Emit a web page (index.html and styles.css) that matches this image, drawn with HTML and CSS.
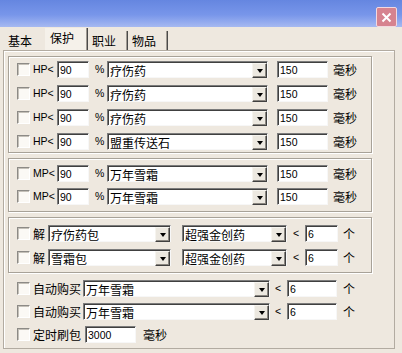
FILE: index.html
```html
<!DOCTYPE html>
<html lang="zh">
  <head>
    <meta charset="UTF-8" />
    <title>保护</title>
    <link rel="stylesheet" href="styles.css">
  </head>
  <body>
    <div class="titlebar">
      <button class="close-btn" title="关闭">
        <svg width="11" height="11" viewBox="0 0 11 11">
          <path d="M1.5 1.5 L9.5 9.5 M9.5 1.5 L1.5 9.5" stroke="#fff" stroke-width="2" />
        </svg>
      </button>
    </div>

    <div class="tabs">
      <div class="tab tab-first">基本</div>
      <div class="tab active">保护</div>
      <div class="tab">职业</div>
      <div class="tab">物品</div>
    </div>

    <div class="panel">
      <!-- HP -->
      <div class="group group-hp">
        <div class="row">
          <input type="checkbox" class="check" />
          <span class="lbl lbl-stat">HP&lt;</span>
          <input class="edit w-pct" value="90" />
          <span class="lbl lbl-pct">%</span>
          <div class="combo w-item"><span class="combo-text">疗伤药</span><span class="combo-btn"></span></div>
          <input class="edit w-ms" value="150" />
          <span class="lbl lbl-unit">毫秒</span>
        </div>
        <div class="row">
          <input type="checkbox" class="check" />
          <span class="lbl lbl-stat">HP&lt;</span>
          <input class="edit w-pct" value="90" />
          <span class="lbl lbl-pct">%</span>
          <div class="combo w-item"><span class="combo-text">疗伤药</span><span class="combo-btn"></span></div>
          <input class="edit w-ms" value="150" />
          <span class="lbl lbl-unit">毫秒</span>
        </div>
        <div class="row">
          <input type="checkbox" class="check" />
          <span class="lbl lbl-stat">HP&lt;</span>
          <input class="edit w-pct" value="90" />
          <span class="lbl lbl-pct">%</span>
          <div class="combo w-item"><span class="combo-text">疗伤药</span><span class="combo-btn"></span></div>
          <input class="edit w-ms" value="150" />
          <span class="lbl lbl-unit">毫秒</span>
        </div>
        <div class="row">
          <input type="checkbox" class="check" />
          <span class="lbl lbl-stat">HP&lt;</span>
          <input class="edit w-pct" value="90" />
          <span class="lbl lbl-pct">%</span>
          <div class="combo w-item"><span class="combo-text">盟重传送石</span><span class="combo-btn"></span></div>
          <input class="edit w-ms" value="150" />
          <span class="lbl lbl-unit">毫秒</span>
        </div>
      </div>

      <!-- MP -->
      <div class="group group-mp">
        <div class="row">
          <input type="checkbox" class="check" />
          <span class="lbl lbl-stat">MP&lt;</span>
          <input class="edit w-pct" value="90" />
          <span class="lbl lbl-pct">%</span>
          <div class="combo w-item"><span class="combo-text">万年雪霜</span><span class="combo-btn"></span></div>
          <input class="edit w-ms" value="150" />
          <span class="lbl lbl-unit">毫秒</span>
        </div>
        <div class="row">
          <input type="checkbox" class="check" />
          <span class="lbl lbl-stat">MP&lt;</span>
          <input class="edit w-pct" value="90" />
          <span class="lbl lbl-pct">%</span>
          <div class="combo w-item"><span class="combo-text">万年雪霜</span><span class="combo-btn"></span></div>
          <input class="edit w-ms" value="150" />
          <span class="lbl lbl-unit">毫秒</span>
        </div>
      </div>

      <!-- unpack -->
      <div class="group group-unpack">
        <div class="row">
          <input type="checkbox" class="check" />
          <span class="lbl lbl-jie">解</span>
          <div class="combo w-pack"><span class="combo-text">疗伤药包</span><span class="combo-btn"></span></div>
          <div class="combo w-drug"><span class="combo-text">超强金创药</span><span class="combo-btn"></span></div>
          <span class="lbl lbl-lt">&lt;</span>
          <input class="edit w-count" value="6" />
          <span class="lbl lbl-ge">个</span>
        </div>
        <div class="row">
          <input type="checkbox" class="check" />
          <span class="lbl lbl-jie">解</span>
          <div class="combo w-pack"><span class="combo-text">雪霜包</span><span class="combo-btn"></span></div>
          <div class="combo w-drug"><span class="combo-text">超强金创药</span><span class="combo-btn"></span></div>
          <span class="lbl lbl-lt">&lt;</span>
          <input class="edit w-count" value="6" />
          <span class="lbl lbl-ge">个</span>
        </div>
      </div>

      <!-- buy / refresh -->
      <div class="section-buy">
        <div class="row">
          <input type="checkbox" class="check" />
          <span class="lbl lbl-long">自动购买</span>
          <div class="combo w-buy"><span class="combo-text">万年雪霜</span><span class="combo-btn"></span></div>
          <span class="lbl lbl-lt2">&lt;</span>
          <input class="edit w-count2" value="6" />
          <span class="lbl lbl-ge2">个</span>
        </div>
        <div class="row">
          <input type="checkbox" class="check" />
          <span class="lbl lbl-long">自动购买</span>
          <div class="combo w-buy"><span class="combo-text">万年雪霜</span><span class="combo-btn"></span></div>
          <span class="lbl lbl-lt2">&lt;</span>
          <input class="edit w-count2" value="6" />
          <span class="lbl lbl-ge2">个</span>
        </div>
        <div class="row">
          <input type="checkbox" class="check" />
          <span class="lbl lbl-long">定时刷包</span>
          <input class="edit w-timer" value="3000" />
          <span class="lbl lbl-unit2">毫秒</span>
        </div>
      </div>
    </div>
  </body>
</html>
```

FILE: styles.css
```css
* {
  box-sizing: border-box;
}
body {
  margin: 0;
  width: 402px;
  height: 353px;
  overflow: hidden;
  background-color: #eee8df;
  font-family: "Noto Sans CJK SC", "Liberation Sans", sans-serif;
  font-size: 12px;
  color: #000;
}

/* title bar */
.titlebar {
  height: 27px;
  display: flex;
  justify-content: flex-end;
  align-items: flex-start;
  padding: 7px 5px 0 0;
  background: linear-gradient(#6586e0, #7896ea 55%, #a6b9f1);
}
.close-btn {
  width: 21px;
  height: 20px;
  padding: 0;
  display: flex;
  align-items: center;
  justify-content: center;
  border: 1px solid #f2d9e0;
  border-radius: 2px;
  background-color: #d6838f;
}

/* tabs */
.tabs {
  height: 23px;
  display: flex;
  align-items: flex-end;
  padding-left: 3px;
}
.tab {
  width: 40px;
  height: 19px;
  line-height: 16px;
  padding: 2px 0 1px 4px;
  border-right: 1px solid #4a4a4a;
  box-shadow: inset -1px 0 #a09a92;
}
.tab-first {
  width: 42px;
  padding-left: 5px;
  border-right: none;
  box-shadow: none;
}
.tab.active {
  width: 43px;
  height: 22px;
  padding: 2px 0 4px 5px;
  background-color: #f5f1ea;
}

/* tab page */
.panel {
  margin-left: 3px;
  width: 392px;
  height: 299px;
  padding: 5px 0 0 4px;
  border: 1px solid #b2aba1;
  box-shadow: inset 1px 1px #fff;
}
.group {
  width: 364px;
  display: flex;
  flex-direction: column;
  padding-left: 8px;
  border: 1px solid #a8a298;
  box-shadow: inset 1px 1px #fff, 1px 1px #fff;
}
.group + .group {
  margin-top: 5px;
}
.group-hp {
  padding-top: 4px;
  padding-bottom: 2px;
  gap: 7px;
}
.group-mp {
  padding-top: 6px;
  padding-bottom: 6px;
  gap: 6px;
}
.group-unpack {
  padding-top: 7px;
  padding-bottom: 6px;
  gap: 7px;
}
.section-buy {
  display: flex;
  flex-direction: column;
  gap: 6px;
  margin-top: 7px;
  padding-left: 9px;
}

/* rows */
.row {
  height: 17px;
  display: flex;
  align-items: center;
}
.lbl {
  white-space: nowrap;
  line-height: 15px;
}
.lbl-stat {
  width: 24px;
  font-family: "Liberation Sans", sans-serif;
  font-size: 10.5px;
}
.lbl-pct {
  width: 18px;
  padding-left: 6px;
  font-family: "Liberation Sans", sans-serif;
  font-size: 10.5px;
}
.lbl-unit {
  margin-left: 5px;
}
.lbl-jie {
  width: 15px;
}
.lbl-lt {
  width: 18px;
  padding-left: 6px;
  font-family: "Liberation Sans", sans-serif;
  font-size: 10.5px;
}
.lbl-ge {
  margin-left: 5px;
}
.lbl-long {
  width: 50px;
}
.lbl-lt2 {
  width: 17px;
  padding-left: 5px;
  font-family: "Liberation Sans", sans-serif;
  font-size: 10.5px;
}
.lbl-ge2 {
  margin-left: 6px;
}
.lbl-unit2 {
  margin-left: 7px;
}

/* win-classic controls */
.check {
  appearance: none;
  width: 13px;
  height: 13px;
  margin: 0 3px 0 0;
  background-color: #fbf9f5;
  border: 1px solid;
  border-color: #8c8a86 #fff #fff #8c8a86;
  box-shadow: inset 1px 1px #c4c0b8;
}
.edit {
  appearance: none;
  height: 17px;
  margin: 0;
  padding: 0 2px;
  background-color: #fff;
  border: 1px solid;
  border-color: #7c7c7c #f7f7f7 #f7f7f7 #7c7c7c;
  box-shadow: inset 1px 1px #404040;
  font-family: "Liberation Sans", sans-serif;
  font-size: 10.5px;
  color: #000;
  outline: none;
}
.w-pct {
  width: 32px;
}
.w-ms {
  width: 51px;
  margin-left: 9px;
}
.w-count {
  width: 33px;
}
.w-count2 {
  width: 50px;
}
.w-timer {
  width: 51px;
  margin-left: 2px;
}
.combo {
  height: 17px;
  display: flex;
  align-items: center;
  background-color: #fff;
  border: 1px solid;
  border-color: #7c7c7c #f7f7f7 #f7f7f7 #7c7c7c;
  box-shadow: inset 1px 1px #404040;
  padding: 1px 0 0 1px;
}
.combo-text {
  flex: 1;
  padding-left: 1px;
  line-height: 15px;
  white-space: nowrap;
}
.combo-btn {
  width: 15px;
  height: 15px;
  display: flex;
  align-items: center;
  justify-content: center;
  background-color: #ece8e0;
  border: 1px solid;
  border-color: #f6f4ef #404040 #404040 #f6f4ef;
  box-shadow: inset -1px -1px #8a8680;
}
.combo-btn::after {
  content: "";
  border-left: 3.5px solid transparent;
  border-right: 3.5px solid transparent;
  border-top: 4px solid #000;
  margin-top: 1px;
}
.w-item {
  width: 161px;
}
.w-pack {
  width: 123px;
}
.w-drug {
  width: 105px;
  margin-left: 11px;
}
.w-buy {
  width: 187px;
}
```
